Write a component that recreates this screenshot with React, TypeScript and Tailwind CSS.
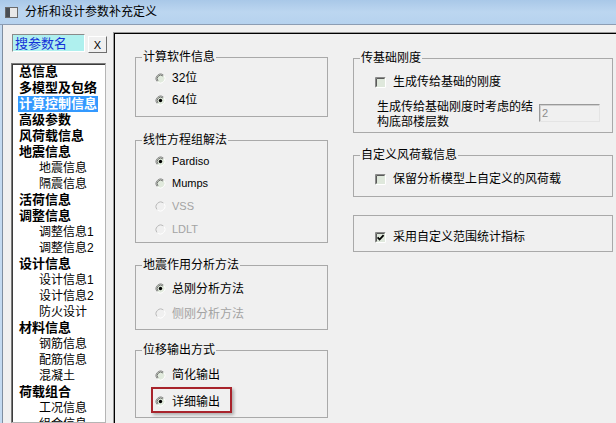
import React from 'react';

const navItems: { label: string; sub?: boolean }[] = [
  { label: '总信息' },
  { label: '多模型及包络' },
  { label: '计算控制信息' },
  { label: '高级参数' },
  { label: '风荷载信息' },
  { label: '地震信息' },
  { label: '地震信息', sub: true },
  { label: '隔震信息', sub: true },
  { label: '活荷信息' },
  { label: '调整信息' },
  { label: '调整信息1', sub: true },
  { label: '调整信息2', sub: true },
  { label: '设计信息' },
  { label: '设计信息1', sub: true },
  { label: '设计信息2', sub: true },
  { label: '防火设计', sub: true },
  { label: '材料信息' },
  { label: '钢筋信息', sub: true },
  { label: '配筋信息', sub: true },
  { label: '混凝土', sub: true },
  { label: '荷载组合' },
  { label: '工况信息', sub: true },
  { label: '组合信息', sub: true },
];

const Radio = ({ checked = false, disabled = false }: { checked?: boolean; disabled?: boolean }) => (
  <svg width="11" height="11" viewBox="0 0 11 11" className="shrink-0">
    <circle cx="5.5" cy="5.5" r="4.5" fill={disabled ? '#f0f0f0' : '#e1eadd'} />
    <path d="M2.32 8.68A4.5 4.5 0 0 1 8.68 2.32" fill="none" stroke={disabled ? '#b8b8b8' : '#8a8a8a'} />
    {!disabled && <path d="M3.03 7.97A3.5 3.5 0 0 1 7.97 3.03" fill="none" stroke="#555" strokeWidth="0.8" />}
    <path d="M8.68 2.32A4.5 4.5 0 0 1 2.32 8.68" fill="none" stroke="#ffffff" />
    {checked && <circle cx="5.5" cy="5.5" r="1.7" fill="#000" />}
  </svg>
);

const Check = ({ checked = false }: { checked?: boolean }) => (
  <svg width="11" height="11" viewBox="0 0 11 11" className="shrink-0">
    <rect x="0" y="0" width="11" height="11" fill="#dfe8dc" />
    <path d="M0.5 10.5V0.5H10.5" fill="none" stroke="#8a8a8a" />
    <path d="M1.5 9.5V1.5H9.5" fill="none" stroke="#5a5a5a" />
    <path d="M0.5 10.5H10.5V0.5" fill="none" stroke="#ffffff" />
    {checked && <path d="M2.6 5.4L4.6 7.5L8.6 3.2" fill="none" stroke="#000" strokeWidth="1.8" />}
  </svg>
);

const App = () => {
  return (
    <div className='w-[616px] h-[423px] overflow-hidden flex flex-col bg-[#c3daf1] text-[12px] text-black font-["Liberation_Sans","Noto_Sans_CJK_SC",sans-serif]'>
      {/* title bar */}
      <div className="h-[25px] shrink-0 flex items-center gap-[7px] pl-[5px] bg-gradient-to-b from-[#a9c8e8] via-[#bcd6f0] to-[#b6d2ee] border-b border-[#8c9db3]">
        <svg width="13" height="11" viewBox="0 0 13 11">
          <rect x="0.5" y="0.5" width="12" height="10" fill="#e8e8e8" stroke="#6b6b6b" />
          <rect x="1" y="1" width="4" height="9" fill="#4a4f55" />
        </svg>
        <span className="leading-[14px]">分析和设计参数补充定义</span>
      </div>

      {/* body */}
      <div className="flex-1 flex ml-[2px] border-l border-[#7f8ea0] bg-[#f0f0f0] min-h-0">
        {/* left nav */}
        <div className="w-[110px] shrink-0 flex flex-col pl-[8px] pt-[9px]">
          <div className="flex items-start">
            <div className="ml-[1px] w-[73px] h-[18px] bg-[#aff0ee] border border-[#8a8a8a] border-r-white border-b-white flex items-center pl-[2px] text-[13px] leading-[15px] text-[#1432d8]">
              搜参数名
            </div>
            <div className="ml-[3px] mt-[2px] w-[19px] h-[17px] border border-white border-r-[#6e6e6e] border-b-[#6e6e6e] flex items-center justify-center text-[11px] leading-[12px]">
              X
            </div>
          </div>
          <div className="mt-[10px] w-[95px] flex-1 bg-white border border-[#7a7a7a] border-r-[#b5b5b5] border-b-[#b5b5b5] shadow-[inset_1px_1px_0_#3c3c3c] overflow-hidden">
            {navItems.map((item, i) => (
              <div
                key={i}
                className={
                  item.sub
                    ? 'h-[16px] flex items-center pl-[26px] leading-[16px] text-[12px]'
                    : 'h-[16px] flex items-center pl-[6px] leading-[16px] text-[13px] font-bold'
                }
              >
                <span className={i === 2 ? 'px-[1px] bg-[#3399ff] text-white' : 'px-[1px]'}>{item.label}</span>
              </div>
            ))}
          </div>
        </div>

        {/* right panel */}
        <div className="flex-1 mt-[7px] border-t border-l border-[#9a9a9a] shadow-[inset_1px_1px_0_#000] flex gap-[25px] pl-[21px] pt-[17px]">
          {/* left column */}
          <div className="w-[193px] shrink-0 flex flex-col">
            <fieldset className="border border-[#a9a9a9]">
              <legend className="ml-[6px] px-[1px] leading-[14px]">计算软件信息</legend>
              <div className="flex flex-col pl-[19px] pt-[3px] pb-[5px]">
                <div className="h-[22px] flex items-center gap-[6px]">
                  <Radio />
                  <span className="leading-[14px]">32位</span>
                </div>
                <div className="h-[22px] flex items-center gap-[6px]">
                  <Radio checked />
                  <span className="leading-[14px]">64位</span>
                </div>
              </div>
            </fieldset>

            <fieldset className="mt-[16px] border border-[#a9a9a9]">
              <legend className="ml-[6px] px-[1px] leading-[14px]">线性方程组解法</legend>
              <div className="flex flex-col pl-[19px] pt-[3px] pb-[2px]">
                <div className="h-[22px] flex items-center gap-[6px]">
                  <Radio checked />
                  <span className="leading-[14px] text-[11px]">Pardiso</span>
                </div>
                <div className="h-[22px] flex items-center gap-[6px]">
                  <Radio />
                  <span className="leading-[14px] text-[11px]">Mumps</span>
                </div>
                <div className="h-[24px] flex items-center gap-[6px]">
                  <Radio disabled />
                  <span className="leading-[14px] text-[11px] text-[#a3a3a3]">VSS</span>
                </div>
                <div className="h-[22px] flex items-center gap-[6px]">
                  <Radio disabled />
                  <span className="leading-[14px] text-[11px] text-[#a3a3a3]">LDLT</span>
                </div>
              </div>
            </fieldset>

            <fieldset className="mt-[15px] border border-[#a9a9a9]">
              <legend className="ml-[6px] px-[1px] leading-[14px]">地震作用分析方法</legend>
              <div className="flex flex-col pl-[19px] pt-[4px] pb-[3px]">
                <div className="h-[25px] flex items-center gap-[6px]">
                  <Radio checked />
                  <span className="leading-[14px]">总刚分析方法</span>
                </div>
                <div className="h-[25px] flex items-center gap-[6px]">
                  <Radio disabled />
                  <span className="leading-[14px] text-[#a3a3a3]">侧刚分析方法</span>
                </div>
              </div>
            </fieldset>

            <fieldset className="mt-[13px] border border-[#a9a9a9]">
              <legend className="ml-[6px] px-[1px] leading-[14px]">位移输出方式</legend>
              <div className="flex flex-col pl-[19px] pt-[5px] pb-[2px]">
                <div className="h-[26px] flex items-center gap-[6px]">
                  <Radio />
                  <span className="leading-[14px]">简化输出</span>
                </div>
                <div className="h-[27px] flex items-center">
                  <div className="relative flex items-center gap-[6px]">
                    <Radio checked />
                    <span className="leading-[14px]">详细输出</span>
                    <span className="absolute -left-[4px] -top-[8px] w-[81px] h-[26px] border-2 border-[#a8232b] shadow-[2px_2px_3px_rgba(0,0,0,0.28)]" />
                  </div>
                </div>
              </div>
            </fieldset>
          </div>

          {/* right column */}
          <div className="w-[260px] shrink-0 flex flex-col mt-[1px]">
            <fieldset className="border border-[#a9a9a9]">
              <legend className="ml-[6px] px-[1px] leading-[14px]">传基础刚度</legend>
              <div className="flex flex-col pl-[21px] pt-[6px] pb-[2px]">
                <div className="h-[22px] flex items-center gap-[7px]">
                  <Check />
                  <span className="leading-[14px]">生成传给基础的刚度</span>
                </div>
                <div className="mt-[7px] flex items-start pl-[2px]">
                  <span className="w-[157px] leading-[15px]">生成传给基础刚度时考虑的结构底部楼层数</span>
                  <div className="ml-[5px] mt-[4px] w-[61px] h-[18px] border border-[#9a9a9a] border-r-[#e4e4e4] border-b-[#e4e4e4] shadow-[inset_1px_1px_0_#d0d0d0] flex items-center pl-[2px] text-[11px] text-[#8d8d8d]">
                    2
                  </div>
                </div>
              </div>
            </fieldset>

            <fieldset className="mt-[15px] border border-[#a9a9a9]">
              <legend className="ml-[6px] px-[1px] leading-[14px]">自定义风荷载信息</legend>
              <div className="flex flex-col pl-[21px] pt-[6px] pb-[6px]">
                <div className="h-[22px] flex items-center gap-[7px]">
                  <Check />
                  <span className="leading-[14px]">保留分析模型上自定义的风荷载</span>
                </div>
              </div>
            </fieldset>

            <div className="mt-[18px] border border-[#a9a9a9] flex flex-col pl-[21px] pt-[10px] pb-[3px]">
              <div className="h-[22px] flex items-center gap-[7px]">
                <Check checked />
                <span className="leading-[14px]">采用自定义范围统计指标</span>
              </div>
            </div>
          </div>
        </div>
      </div>
    </div>
  );
};

export default App;
